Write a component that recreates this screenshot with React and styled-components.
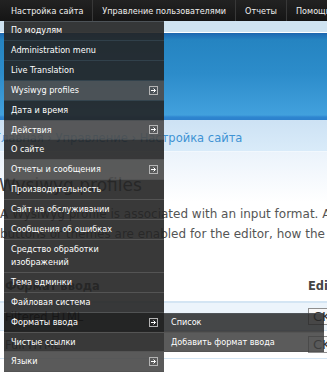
import React from 'react';
import styled, { createGlobalStyle } from 'styled-components';

const GlobalStyle = createGlobalStyle`
  html, body {
    margin: 0;
    padding: 0;
    overflow: hidden;
    background: #fff;
  }
  body {
    font-family: "DejaVu Sans", Verdana, sans-serif;
  }
`;

const Screen = styled.div`
  position: relative;
  width: 327px;
  height: 373px;
  overflow: hidden;
`;

const TopBar = styled.nav`
  display: flex;
  height: 21px;
  padding-left: 2px;
  background: linear-gradient(#222, #151515);
  font-family: "DejaVu Sans Condensed", "DejaVu Sans", sans-serif;
  font-size: 9px;
  color: #eee;
  white-space: nowrap;
`;

const TopItem = styled.div`
  display: flex;
  align-items: center;
  flex-shrink: 0;
  padding: 0 9px;
  border-right: 1px solid #383838;
`;

const SkyBand = styled.div`
  height: 11px;
  background: #cfe3f1;
  border-bottom: 1px solid #fff;
`;

const Banner = styled.header`
  height: 87px;
  background: linear-gradient(
    #1c64ac 0,
    #1f6fb6 2px,
    #2584c1 7px,
    #2c8cca 40px,
    #42a1dd 82px,
    #2f86d0 84px,
    #2b80cc 87px
  );
`;

const Crumbs = styled.div`
  display: flex;
  align-items: center;
  height: 32px;
  padding-top: 4px;
  box-sizing: border-box;
  background: linear-gradient(#cde2f4, #d9ebf9);
  border-bottom: 1px solid #f2f8fd;
  font-size: 11.5px;
  color: #3f93d4;
  white-space: nowrap;
`;

const CrumbTrail = styled.span`
  margin-left: -6px;
`;

const Content = styled.main`
  padding-top: 22px;
  background: linear-gradient(#ebf3fb, #fff 50px);
  color: #555;
`;

const Title = styled.h2`
  margin: 0 0 0 -1px;
  font-size: 17px;
  line-height: 22px;
  font-weight: normal;
  color: #4a4a4a;
  white-space: nowrap;
`;

const Help = styled.p`
  margin: 8px 0 0;
  font-size: 12px;
  line-height: 20px;
  white-space: nowrap;
`;

const Table = styled.div`
  display: grid;
  grid-template-columns: 303px 320px;
  margin-top: 27px;
  font-size: 11.5px;
  color: #555;
  white-space: nowrap;
`;

const HeadCell = styled.div`
  display: flex;
  align-items: center;
  height: 30px;
  padding-left: 5px;
  border-bottom: 2px solid #d4e5f3;
  font-weight: bold;
  color: #444;
`;

const Cell = styled.div`
  display: flex;
  align-items: center;
  height: 27px;
  padding-left: 5px;
  border-bottom: 1px solid #d4e5f3;
  background: ${p => (p.$odd ? '#ecf4fb' : '#fff')};
`;

const Select = styled.div`
  height: 15px;
  padding: 0 4px;
  border: 1px solid #8e8e8e;
  background: #f8f8f8;
  font-size: 13px;
  line-height: 15px;
  color: #333;
`;

const Dropdown = styled.ul`
  position: absolute;
  top: 21px;
  left: 4px;
  width: 160px;
  margin: 0;
  padding: 0;
  list-style: none;
  font-family: "DejaVu Sans Condensed", "DejaVu Sans", sans-serif;
  font-size: 9px;
  color: #fff;
`;

const rowBg = {
  normal: 'rgba(36, 36, 36, 0.9)',
  expand: 'rgba(77, 77, 77, 0.925)',
  active: 'rgba(18, 18, 18, 0.92)',
  sub: 'rgba(40, 40, 40, 0.85)',
  subLight: 'rgba(62, 62, 62, 0.85)',
};

const Row = styled.li`
  position: relative;
  display: flex;
  align-items: center;
  justify-content: space-between;
  padding: 3px 6px 3px 7px;
  line-height: 12.9px;
  white-space: nowrap;
  background: ${p => rowBg[p.$kind || 'normal']};
  background-clip: padding-box;
  border-bottom: 1px solid rgba(51, 51, 51, 0.84);

  &:first-child {
    padding-top: 2px;
    border-top: 1px solid rgba(64, 68, 72, 0.9);
  }
`;

const Submenu = styled.ul`
  position: absolute;
  top: 0;
  left: 160px;
  width: 160px;
  margin: 0;
  padding: 0;
  list-style: none;
`;

const Arrow = () => (
  <svg width="9" height="9" viewBox="0 0 9 9">
    <rect x="0.5" y="0.5" width="8" height="8" fill="none" stroke="#b4b4b4" />
    <path d="M2 4.5H6.5M4.5 2.5L6.5 4.5L4.5 6.5" fill="none" stroke="#fff" />
  </svg>
);

const items = [
  { label: 'По модулям' },
  { label: 'Administration menu' },
  { label: 'Live Translation' },
  { label: 'Wysiwyg profiles', kind: 'expand' },
  { label: 'Дата и время' },
  { label: 'Действия', kind: 'expand' },
  { label: 'О сайте' },
  { label: 'Отчеты и сообщения', kind: 'expand' },
  { label: 'Производительность' },
  { label: 'Сайт на обслуживании' },
  { label: 'Сообщения об ошибках' },
  { label: ['Средство обработки', 'изображений'] },
  { label: 'Тема админки' },
  { label: 'Файловая система' },
  { label: 'Форматы ввода', kind: 'active', sub: ['Список', 'Добавить формат ввода'] },
  { label: 'Чистые ссылки' },
  { label: 'Языки', kind: 'expand' },
];

export default function App() {
  return (
    <Screen>
      <GlobalStyle />
      <TopBar>
        <TopItem>Настройка сайта</TopItem>
        <TopItem>Управление пользователями</TopItem>
        <TopItem>Отчеты</TopItem>
        <TopItem>Помощь</TopItem>
      </TopBar>
      <SkyBand />
      <Banner />
      <Crumbs>
        <CrumbTrail>Главная › Управление › Настройка сайта</CrumbTrail>
      </Crumbs>
      <Content>
        <Title>Wysiwyg profiles</Title>
        <Help>
          A Wysiwyg profile is associated with an input format. A Wysiwyg profile defines which client-side editor is loaded, what
          <br />
          buttons or themes are enabled for the editor, how the editor is displayed, and a few other editor-specific functions.
        </Help>
        <Table>
          <HeadCell>Формат ввода</HeadCell>
          <HeadCell>Editor</HeadCell>
          <Cell $odd>Filtered HTML</Cell>
          <Cell $odd><Select>CKEditor</Select></Cell>
          <Cell>Full HTML</Cell>
          <Cell><Select>CKEditor</Select></Cell>
        </Table>
      </Content>

      <Dropdown>
        {items.map((item, i) => (
          <Row key={i} $kind={item.kind}>
            <span>
              {Array.isArray(item.label) ? (
                <>
                  {item.label[0]}
                  <br />
                  {item.label[1]}
                </>
              ) : (
                item.label
              )}
            </span>
            {item.kind && <Arrow />}
            {item.sub && (
              <Submenu>
                {item.sub.map((s, j) => (
                  <Row key={s} $kind={j === 0 ? 'sub' : 'subLight'}>
                    <span>{s}</span>
                  </Row>
                ))}
              </Submenu>
            )}
          </Row>
        ))}
      </Dropdown>
    </Screen>
  );
}
